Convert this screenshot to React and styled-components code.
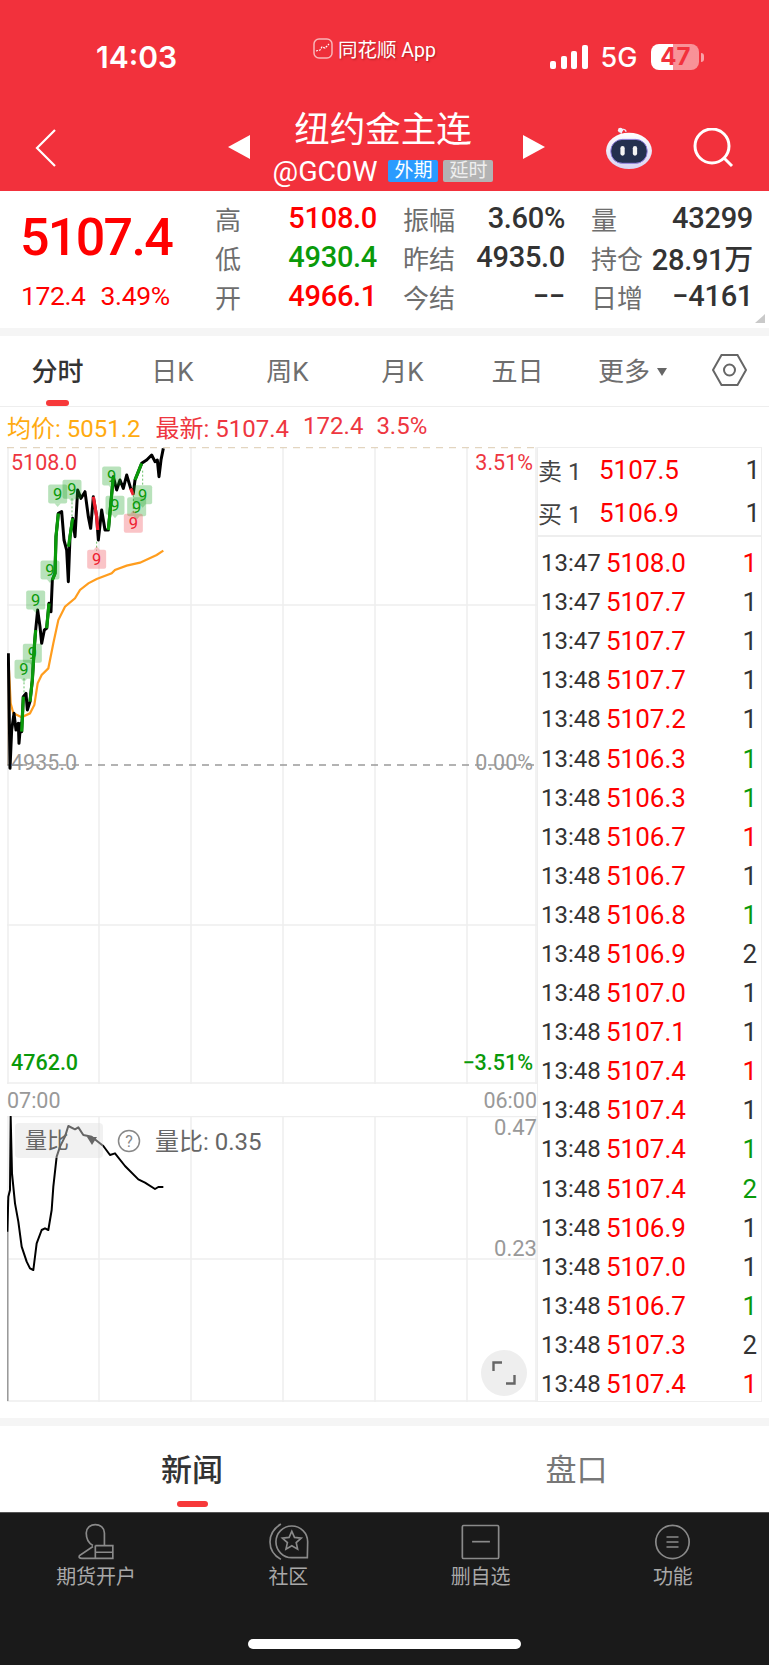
import React from "react";
import styled, { createGlobalStyle } from "styled-components";

const GlobalStyle = createGlobalStyle`
  html, body { margin: 0; padding: 0; background: #fff; }
  body { font-family: Roboto, "Noto Sans CJK SC", sans-serif; }
  * { box-sizing: border-box; }
`;

const RED = "#ff0000";
const GREEN = "#0a9a0a";
const DARK = "#333333";

const Page = styled.div`
  width: 769px;
  height: 1665px;
  overflow: hidden;
  position: relative;
  background: #fff;
`;

/* ---------- header ---------- */
const Header = styled.div`
  height: 191px;
  background: #f2313c;
  color: #fff;
`;

const StatusBar = styled.div`
  height: 105px;
  padding: 9px 0 0 96px;
  display: flex;
  align-items: center;
`;

const Clock = styled.div`
  width: 88px;
  font: 600 30px Inter, sans-serif;
  white-space: nowrap;
`;

const AppLabel = styled.div`
  margin: 0 0 18px 129px;
  width: 124px;
  display: flex;
  align-items: center;
  gap: 5px;
  font-size: 19.5px;
  white-space: nowrap;
  text-shadow: 1px 1px 2px rgba(90, 0, 0, 0.45);
`;

const Signal = styled.div`
  margin-left: 113px;
  display: flex;
  align-items: flex-end;
  gap: 4.5px;
  height: 24px;
`;

const SignalBar = styled.span`
  width: 6px;
  height: ${(p) => p.$h}px;
  background: #fff;
  border-radius: 2px;
`;

const Net = styled.div`
  margin-left: 13px;
  font: 500 27px Inter, sans-serif;
`;

const Battery = styled.div`
  margin-left: 14px;
  width: 48px;
  height: 26px;
  border-radius: 8px;
  position: relative;
  background: linear-gradient(90deg, #fff 46%, rgba(255, 255, 255, 0.47) 46%);
  color: #f2313c;
  font: 700 24px/26px Inter, sans-serif;
  text-align: center;
  &::after {
    content: "";
    position: absolute;
    right: -5px;
    top: 9px;
    width: 3px;
    height: 9px;
    border-radius: 0 3px 3px 0;
    background: rgba(255, 255, 255, 0.55);
  }
`;

const NavRow = styled.div`
  height: 86px;
  display: grid;
  grid-template-columns: 228px 22px 266px 28px 61px 47px 41px 41px;
  align-items: center;
`;

const BackIcon = styled.svg`
  margin-left: 35px;
  display: block;
`;

const Centre = styled.div`
  align-self: start;
  display: flex;
  flex-direction: column;
  align-items: center;
`;

const Title = styled.div`
  font-size: 35.5px;
  line-height: 44px;
  font-family: "Noto Sans CJK SC", sans-serif;
`;

const Code = styled.div`
  margin-top: 10px;
  display: flex;
  align-items: center;
  gap: 5px;
  height: 24px;
`;

const CodeText = styled.span`
  font-size: 28.5px;
  margin-right: 6px;
`;

const Badge = styled.span`
  width: 50px;
  height: 22px;
  background: ${(p) => p.$bg};
  color: ${(p) => p.$fg};
  border-radius: 2px;
  font-size: 19px;
  line-height: 22px;
  text-align: center;
`;

const Arrow = styled.svg`
  display: block;
  margin-top: -3px;
  ${(p) => p.$right && "margin-left: 7px;"}
`;

const RobotIcon = styled.svg`
  display: block;
  grid-column: 6 / 7;
  grid-row: 1;
`;

const SearchIcon = styled.svg`
  display: block;
  grid-column: 8 / 9;
  grid-row: 1;
`;

/* ---------- quote stats ---------- */
const Stats = styled.div`
  height: 137px;
  display: flex;
  position: relative;
  background: #fff;
`;

const Latest = styled.div`
  width: 215px;
  padding: 19px 0 0 20px;
`;

const LatestPrice = styled.div`
  color: ${RED};
  font-size: 52px;
  line-height: 56px;
  font-weight: 500;
  letter-spacing: -1.7px;
`;

const LatestChange = styled.div`
  margin-top: 14px;
  padding-left: 1px;
  color: ${RED};
  font-size: 26.5px;
  line-height: 32px;
  display: flex;
  gap: 15px;
  letter-spacing: -0.4px;
`;

const StatGrid = styled.div`
  padding-top: 7.5px;
  display: grid;
  grid-template-columns: repeat(3, 162px);
  grid-auto-rows: 39px;
  column-gap: 26px;
`;

const StatCell = styled.div`
  display: flex;
  justify-content: space-between;
  align-items: center;
  white-space: nowrap;
`;

const StatLabel = styled.span`
  color: #6e6e6e;
  font-size: 26px;
  font-family: "Noto Sans CJK SC", sans-serif;
  line-height: 39px;
`;

const StatValue = styled.span`
  color: ${(p) => p.$color || DARK};
  font-size: 29px;
  font-weight: 500;
  letter-spacing: -0.3px;
`;

const Corner = styled.div`
  position: absolute;
  right: 4px;
  bottom: 5px;
  width: 0;
  height: 0;
  border-left: 10px solid transparent;
  border-bottom: 9px solid #c9c9c9;
`;

const Band = styled.div`
  height: 8px;
  margin-top: ${(p) => p.$top || 0}px;
  background: #f5f5f5;
`;

/* ---------- period tabs ---------- */
const TabBar = styled.div`
  height: 71px;
  display: grid;
  grid-template-columns: repeat(6, 115px) 79px;
  border-bottom: 1px solid #eeeeee;
`;

const Tab = styled.div`
  display: flex;
  flex-direction: column;
  align-items: center;
  padding-top: 18px;
`;

const TabText = styled.div`
  height: 36px;
  display: flex;
  align-items: center;
  gap: 7px;
  font-size: 26px;
  line-height: 36px;
  font-weight: ${(p) => (p.$active ? 500 : 400)};
  color: ${(p) => (p.$active ? DARK : "#6e6e6e")};
`;

const TabLine = styled.div`
  margin-top: 10px;
  width: ${(p) => p.$w}px;
  height: 6px;
  border-radius: 3px;
  background: #f7393a;
`;

const Caret = styled.span`
  width: 0;
  height: 0;
  border-left: 5.5px solid transparent;
  border-right: 5.5px solid transparent;
  border-top: 8px solid #666;
`;

const Legend = styled.div`
  height: 40px;
  padding: 0 0 2px 7px;
  display: flex;
  align-items: center;
  font-size: 24px;
  white-space: nowrap;
  color: #ee3640;
`;

const LegendPart = styled.span`
  margin-left: ${(p) => p.$gap || 0}px;
  color: ${(p) => p.$color || "inherit"};
`;

/* ---------- chart ---------- */
const ChartRow = styled.div`
  height: 955px;
  padding-left: 7px;
  display: flex;
`;

const ChartCol = styled.div`
  width: 530px;
  display: flex;
  flex-direction: column;
`;

const Pane = styled.div`
  position: relative;
  height: ${(p) => p.$h}px;
`;

const PaneSvg = styled.svg`
  display: block;
`;

const AxisOverlay = styled.div`
  position: absolute;
  inset: 0;
  padding: 0 4px 7px;
  display: flex;
  flex-direction: column;
  justify-content: space-between;
`;

const AxisRow = styled.div`
  height: 30px;
  display: flex;
  justify-content: space-between;
  align-items: center;
  font-size: 21.5px;
  color: ${(p) => p.$color};
  font-weight: ${(p) => p.$weight || 400};
`;

const TimeRow = styled.div`
  height: 32px;
  display: flex;
  justify-content: space-between;
  align-items: center;
  color: #999;
  font-size: 21.5px;
`;

const SubScale = styled.div`
  position: absolute;
  right: 0;
  top: ${(p) => p.$top}px;
  color: #999;
  font-size: 22px;
  line-height: 24px;
`;

const IndicatorBar = styled.div`
  position: absolute;
  left: 8px;
  top: 7px;
  display: flex;
  align-items: center;
`;

const IndicatorChip = styled.div`
  width: 88px;
  height: 35px;
  padding-left: 10px;
  border-radius: 4px;
  background: rgba(225, 225, 225, 0.45);
  color: #666;
  font-size: 22px;
  line-height: 35px;
  display: flex;
  align-items: center;
  gap: 18px;
`;

const HelpIcon = styled.svg`
  margin-left: 14px;
  display: block;
`;

const IndicatorText = styled.div`
  margin: -3px 0 0 14px;
  color: #666;
  font-size: 24px;
  white-space: nowrap;
`;

const ExpandButton = styled.div`
  position: absolute;
  right: 10px;
  bottom: 6px;
  width: 46px;
  height: 46px;
  border-radius: 50%;
  background: #eeeeee;
  display: flex;
  align-items: center;
  justify-content: center;
`;

/* ---------- order book ---------- */
const Side = styled.div`
  width: 225px;
  height: 954.5px;
  border: 1.5px solid #eeeeee;
`;

const Book = styled.div`
  height: 88.5px;
  border-bottom: 2.5px solid #eeeeee;
`;

const BookRow = styled.div`
  height: 43px;
  display: grid;
  grid-template-columns: 61px 1fr auto;
  align-items: center;
  padding-right: 1px;
`;

const BookLabel = styled.div`
  color: #444;
  font-size: 24px;
  white-space: nowrap;
`;

const Ticks = styled.div`
  padding-top: 7px;
`;

const Tick = styled.div`
  height: 39.1px;
  display: grid;
  grid-template-columns: 65px 1fr auto;
  align-items: center;
  padding: 0 4px 0 3px;
`;

const Time = styled.div`
  color: ${DARK};
  font-size: 24px;
`;

const Price = styled.div`
  color: ${RED};
  font-size: 26px;
`;

const Vol = styled.div`
  color: ${(p) => p.$color || DARK};
  font-size: 26px;
`;

/* ---------- lower tabs and nav ---------- */
const NewsTabs = styled.div`
  height: 86px;
  display: grid;
  grid-template-columns: 384px 385px;
`;

const NewsTab = styled.div`
  display: flex;
  flex-direction: column;
  align-items: center;
  padding-top: 20px;
`;

const NewsText = styled.div`
  font-size: 31px;
  line-height: 44px;
  font-weight: ${(p) => (p.$active ? 500 : 400)};
  color: ${(p) => (p.$active ? DARK : "#777")};
  font-family: "Noto Sans CJK SC", sans-serif;
`;

const NewsLine = styled.div`
  margin-top: 11px;
  width: 31px;
  height: 6px;
  border-radius: 3px;
  background: #f7393a;
`;

const BottomNav = styled.div`
  height: 153px;
  background: #1a1a1a;
  border-top: 1px solid #555;
  display: grid;
  grid-template-columns: repeat(4, 192.25px);
  align-content: start;
  padding-top: 9px;
`;

const NavItem = styled.div`
  display: flex;
  flex-direction: column;
  align-items: center;
  color: #a8a8a8;
  font-size: 20px;
`;

const NavIconBox = styled.div`
  height: 39px;
  display: flex;
  align-items: center;
  justify-content: center;
`;

const NavLabel = styled.div`
  line-height: 28px;
  margin-top: 1px;
  font-family: "Noto Sans CJK SC", sans-serif;
`;

const HomeBar = styled.div`
  position: absolute;
  left: 248px;
  bottom: 16px;
  width: 273px;
  height: 10px;
  border-radius: 5px;
  background: #fff;
`;

/* ---------- data ---------- */
const pts = (arr, oy) => arr.map(([x, y]) => `${x / 3},${oy + y / 3}`).join(" ");

const priceLine = [
  [25, 670], [27, 800], [30, 1015], [35, 900], [42, 850], [48, 900], [55, 880], [57, 940], [62, 880],
  [65, 905], [70, 800], [78, 790], [82, 840], [90, 815], [97, 750], [103, 650], [107, 600], [113, 540],
  [120, 590], [125, 640], [133, 600], [140, 595], [147, 520], [153, 545], [157, 450], [165, 430],
  [168, 320], [175, 250], [185, 245], [192, 330], [200, 360], [205, 455], [210, 320], [218, 265],
  [225, 320], [233, 180], [243, 205], [255, 185], [265, 260], [272, 295], [280, 200], [290, 260],
  [295, 330], [305, 240], [315, 300], [325, 300], [340, 140], [350, 180], [360, 150], [370, 175],
  [380, 135], [392, 175], [400, 190], [405, 150], [425, 100], [440, 90], [455, 75], [465, 95],
  [472, 90], [477, 140], [483, 90], [490, 55],
];

const greenParts = [
  [[65, 905], [70, 800]],
  [[90, 815], [97, 750], [103, 650], [107, 600]],
  [[140, 595], [147, 520]],
  [[157, 450], [165, 430], [168, 320], [175, 250]],
  [[205, 350], [210, 320], [218, 265]],
  [[325, 300], [340, 140]],
  [[405, 150], [425, 100]],
];

const redParts = [
  [[280, 200], [290, 260], [293, 300]],
  [[392, 175], [400, 195]],
];

const avgLine = [
  [27, 720], [32, 820], [40, 850], [65, 862], [90, 850], [103, 825], [113, 760], [125, 735], [145, 715],
  [160, 640], [175, 570], [195, 530], [225, 505], [240, 480], [265, 460], [290, 447], [335, 430],
  [345, 420], [380, 407], [420, 398], [470, 375], [490, 362],
];

const ratioLine = [
  [22, 575], [25, 470], [30, 450], [32, 230], [36, 400], [45, 490], [55, 545], [65, 620], [80, 665],
  [90, 685], [100, 690], [110, 610], [125, 570], [135, 565], [145, 570], [155, 510], [160, 440],
  [170, 350], [180, 320], [195, 290], [205, 258], [225, 268], [235, 262], [250, 285], [275, 290],
  [310, 318], [330, 345], [345, 340], [375, 378], [415, 418], [435, 428], [465, 447], [475, 441], [490, 441],
];

const flags = [
  { x: 72, y: 718 }, { x: 97, y: 670 }, { x: 107, y: 510 }, { x: 150, y: 420 },
  { x: 173, y: 192 }, { x: 216, y: 178 }, { x: 335, y: 138 }, { x: 345, y: 226 },
  { x: 428, y: 194 }, { x: 410, y: 230 }, { x: 290, y: 388, red: 1 }, { x: 400, y: 280, red: 1 },
];

const stemLines = [
  [72, 745, 72, 800], [216, 205, 216, 265], [428, 122, 428, 170], [290, 335, 290, 362], [400, 195, 400, 255],
];

const ticks = [
  ["13:47", "5108.0", "1", RED], ["13:47", "5107.7", "1"], ["13:47", "5107.7", "1"], ["13:48", "5107.7", "1"],
  ["13:48", "5107.2", "1"], ["13:48", "5106.3", "1", GREEN], ["13:48", "5106.3", "1", GREEN], ["13:48", "5106.7", "1", RED],
  ["13:48", "5106.7", "1"], ["13:48", "5106.8", "1", GREEN], ["13:48", "5106.9", "2"], ["13:48", "5107.0", "1"],
  ["13:48", "5107.1", "1"], ["13:48", "5107.4", "1", RED], ["13:48", "5107.4", "1"], ["13:48", "5107.4", "1", GREEN],
  ["13:48", "5107.4", "2", GREEN], ["13:48", "5106.9", "1"], ["13:48", "5107.0", "1"], ["13:48", "5106.7", "1", GREEN],
  ["13:48", "5107.3", "2"], ["13:48", "5107.4", "1", RED],
];

const stats = [
  ["高", "5108.0", RED], ["振幅", "3.60%"], ["量", "43299"],
  ["低", "4930.4", GREEN], ["昨结", "4935.0"], ["持仓", "28.91万"],
  ["开", "4966.1", RED], ["今结", "−−"], ["日增", "−4161"],
];

const GRID = "#eeeeee";
const vLines = [8, 99, 191, 283, 375, 467, 536];

const Flag = ({ x, y, red }) => {
  const cx = x / 3;
  const cy = 430 + y / 3;
  const fill = red ? "rgba(240,60,70,0.3)" : "rgba(20,160,30,0.3)";
  const edge = red ? cy - 9.5 : cy + 9.5;
  const tip = red ? cy - 13 : cy + 13;
  return (
    <g>
      <rect x={cx - 9.5} y={cy - 9.5} width="19" height="19" rx="2" fill={fill} />
      <path d={`M${cx - 3} ${edge} L${cx} ${tip} L${cx + 3} ${edge}Z`} fill={fill} />
      <text x={cx} y={cy + 6} textAnchor="middle" fontSize="16.5" fontFamily="Roboto, sans-serif" fill={red ? "#ee2030" : "#0a9a0a"}>9</text>
    </g>
  );
};

const MainChart = () => (
  <PaneSvg width="530" height="637" viewBox="7 447 530 637">
    {vLines.map((x) => (
      <line key={x} x1={x} x2={x} y1="447" y2="1084" stroke={GRID} strokeWidth="1.5" />
    ))}
    <line x1="7" x2="537" y1="605" y2="605" stroke={GRID} strokeWidth="1.5" />
    <line x1="7" x2="537" y1="925" y2="925" stroke={GRID} strokeWidth="1.5" />
    <line x1="7" x2="537" y1="1083" y2="1083" stroke={GRID} strokeWidth="1.5" />
    <line x1="7" x2="537" y1="447.5" y2="447.5" stroke="#e3d5c0" strokeWidth="1.5" strokeDasharray="7 6" />
    <line x1="7" x2="537" y1="765" y2="765" stroke="#9a9a9a" strokeWidth="1.5" strokeDasharray="7 6" />
    <line x1="7" x2="7" y1="670" y2="765" stroke="#a89a88" strokeWidth="1.5" />
    {stemLines.map(([x1, y1, x2, y2]) => (
      <line key={`${x1}-${y1}`} x1={x1 / 3} x2={x2 / 3} y1={430 + y1 / 3} y2={430 + y2 / 3} stroke="#0a9a0a" strokeWidth="1" strokeDasharray="2 2" opacity="0.6" />
    ))}
    <polyline points={pts(avgLine, 430)} fill="none" stroke="#ff9d1e" strokeWidth="2.2" />
    <polyline points={pts(priceLine, 430)} fill="none" stroke="#000" strokeWidth="3" strokeLinejoin="round" />
    {greenParts.map((p, i) => (
      <polyline key={i} points={pts(p, 430)} fill="none" stroke="#0a9a0a" strokeWidth="3.2" />
    ))}
    {redParts.map((p, i) => (
      <polyline key={i} points={pts(p, 430)} fill="none" stroke="#ee2030" strokeWidth="3.2" />
    ))}
    {flags.map((f) => (
      <Flag key={`${f.x}-${f.y}`} {...f} />
    ))}
  </PaneSvg>
);

const SubChart = () => (
  <PaneSvg width="530" height="286" viewBox="7 1116 530 286">
    {vLines.map((x) => (
      <line key={x} x1={x} x2={x} y1="1116" y2="1402" stroke={GRID} strokeWidth="1.5" />
    ))}
    <line x1="7" x2="537" y1="1116.5" y2="1116.5" stroke={GRID} strokeWidth="1.5" />
    <line x1="7" x2="537" y1="1259" y2="1259" stroke={GRID} strokeWidth="1.5" />
    <line x1="7" x2="537" y1="1401" y2="1401" stroke={GRID} strokeWidth="1.5" />
    <line x1="7.5" x2="7.5" y1="1200" y2="1401" stroke="#9a9a9a" strokeWidth="2" />
    <polyline points={pts(ratioLine, 1040)} fill="none" stroke="#000" strokeWidth="2" strokeLinejoin="round" />
  </PaneSvg>
);

const Robot = () => (
  <RobotIcon width="48" height="44" viewBox="0 0 50 46">
    <defs>
      <linearGradient id="robotShell" x1="0" y1="0" x2="0" y2="1">
        <stop offset="0" stopColor="#ffffff" />
        <stop offset="1" stopColor="#d9d4f2" />
      </linearGradient>
    </defs>
    <path d="M17 8 C16 3 21 2 22 6" fill="none" stroke="#e9e6f8" strokeWidth="1.5" />
    <circle cx="16" cy="4.5" r="2.6" fill="#f3f1fb" />
    <ellipse cx="25" cy="26" rx="24" ry="19" fill="url(#robotShell)" />
    <rect x="6" y="14" width="38" height="25" rx="12" fill="#24304f" stroke="#8f7de0" strokeWidth="1" />
    <rect x="16" y="21" width="4.5" height="10" rx="2.2" fill="#f4f4f4" />
    <rect x="29" y="21" width="4.5" height="10" rx="2.2" fill="#f4f4f4" />
  </RobotIcon>
);

const Logo = () => (
  <svg width="20" height="21" viewBox="0 0 20 21">
    <rect x="1" y="1" width="18" height="19" rx="5" fill="#ee2f3a" stroke="#f9b5b8" strokeWidth="1.5" />
    <path d="M3 13 L7 12 L9 9 L12 10 L16 6" fill="none" stroke="#fff" strokeWidth="1.2" strokeDasharray="2 1" />
  </svg>
);

const PersonIcon = () => (
  <svg width="36" height="37" viewBox="84 25 106 110" fill="none" stroke="#8a8a8a" strokeWidth="5">
    <path d="M128 92 C112 84 108 70 108 55 C108 40 120 30 135 30 C150 30 162 40 162 55 L162 92" />
    <path d="M135 92 H187 V130 H95 Q84 130 88 122 L128 95 M137 112 H187 M135 92 V130" />
  </svg>
);

const CommunityIcon = () => (
  <svg width="43" height="39" viewBox="650 22 130 118" fill="none" stroke="#8a8a8a" strokeWidth="5">
    <path d="M772 130 H725 A48 48 0 1 1 773 82 Z" />
    <path d="M692 28 C648 55 648 110 692 135" />
    <polygon points="725,50 733.2,68.7 753.5,70.7 738.3,84.3 742.6,104.3 725,94 707.4,104.3 711.7,84.3 696.5,70.7 716.8,68.7" />
  </svg>
);

const RemoveIcon = () => (
  <svg width="39" height="36" viewBox="92 28 116 106" fill="none" stroke="#8a8a8a" strokeWidth="5">
    <rect x="96" y="32" width="108" height="98" rx="4" />
    <path d="M125 80 H178" />
  </svg>
);

const MenuIcon = () => (
  <svg width="37" height="36" viewBox="670 26 110 108" fill="none" stroke="#8a8a8a" strokeWidth="5">
    <circle cx="725" cy="80" r="50" />
    <path d="M707 65 H743 M707 80 H743 M707 95 H743" />
  </svg>
);

const App = () => {
  return (
    <Page>
      <GlobalStyle />
      <Header>
        <StatusBar>
          <Clock>14:03</Clock>
          <AppLabel>
            <Logo />
            同花顺 App
          </AppLabel>
          <Signal>
            <SignalBar $h={8} />
            <SignalBar $h={13} />
            <SignalBar $h={18} />
            <SignalBar $h={24} />
          </Signal>
          <Net>5G</Net>
          <Battery>47</Battery>
        </StatusBar>
        <NavRow>
          <BackIcon width="21" height="38" viewBox="0 0 21 38">
            <path d="M20 1 L2 19 L20 37" fill="none" stroke="#fff" strokeWidth="2.2" />
          </BackIcon>
          <Arrow width="22" height="24" viewBox="0 0 22 24">
            <path d="M22 0 V24 L0 12Z" fill="#fff" />
          </Arrow>
          <Centre>
            <Title>纽约金主连</Title>
            <Code>
              <CodeText>@GC0W</CodeText>
              <Badge $bg="#2a9bff" $fg="#fff">外期</Badge>
              <Badge $bg="#b3b3b3" $fg="#eeeeee">延时</Badge>
            </Code>
          </Centre>
          <Arrow $right width="22" height="24" viewBox="0 0 22 24">
            <path d="M0 0 V24 L22 12Z" fill="#fff" />
          </Arrow>
          <Robot />
          <SearchIcon width="41" height="40" viewBox="0 0 41 40">
            <circle cx="19" cy="18" r="17" fill="none" stroke="#fff" strokeWidth="3" />
            <path d="M31 30 L39 38" stroke="#fff" strokeWidth="3" />
          </SearchIcon>
        </NavRow>
      </Header>

      <Stats>
        <Latest>
          <LatestPrice>5107.4</LatestPrice>
          <LatestChange>
            <span>172.4</span>
            <span>3.49%</span>
          </LatestChange>
        </Latest>
        <StatGrid>
          {stats.map(([label, value, color]) => (
            <StatCell key={label}>
              <StatLabel>{label}</StatLabel>
              <StatValue $color={color}>{value}</StatValue>
            </StatCell>
          ))}
        </StatGrid>
        <Corner />
      </Stats>
      <Band />

      <TabBar>
        <Tab>
          <TabText $active>分时</TabText>
          <TabLine $w={23} />
        </Tab>
        <Tab><TabText>日K</TabText></Tab>
        <Tab><TabText>周K</TabText></Tab>
        <Tab><TabText>月K</TabText></Tab>
        <Tab><TabText>五日</TabText></Tab>
        <Tab>
          <TabText>更多<Caret /></TabText>
        </Tab>
        <Tab>
          <svg width="35" height="32" viewBox="0 0 35 32">
            <path d="M1 16 L9.5 1 H25.5 L34 16 L25.5 31 H9.5 Z" fill="none" stroke="#666" strokeWidth="2" />
            <circle cx="17.5" cy="16" r="5.5" fill="none" stroke="#666" strokeWidth="2" />
          </svg>
        </Tab>
      </TabBar>

      <Legend>
        <LegendPart $color="#ffaa10">均价: 5051.2</LegendPart>
        <LegendPart $gap={15}>最新: 5107.4</LegendPart>
        <LegendPart $gap={14}>172.4</LegendPart>
        <LegendPart $gap={13}>3.5%</LegendPart>
      </Legend>

      <ChartRow>
        <ChartCol>
          <Pane $h={637}>
            <MainChart />
            <AxisOverlay>
              <AxisRow $color="#ee3640"><span>5108.0</span><span>3.51%</span></AxisRow>
              <AxisRow $color="#999"><span>4935.0</span><span>0.00%</span></AxisRow>
              <AxisRow $color={GREEN} $weight={500}><span>4762.0</span><span>−3.51%</span></AxisRow>
            </AxisOverlay>
          </Pane>
          <TimeRow>
            <span>07:00</span>
            <span>06:00</span>
          </TimeRow>
          <Pane $h={286}>
            <SubChart />
            <SubScale $top={0}>0.47</SubScale>
            <SubScale $top={121}>0.23</SubScale>
            <IndicatorBar>
              <IndicatorChip>
                量比
                <Caret />
              </IndicatorChip>
              <HelpIcon width="24" height="24" viewBox="0 0 24 24">
                <circle cx="12" cy="12" r="10.5" fill="none" stroke="#888" strokeWidth="1.5" />
                <text x="12" y="17.5" textAnchor="middle" fontSize="16" fontFamily="Roboto, sans-serif" fill="#888">?</text>
              </HelpIcon>
              <IndicatorText>量比: 0.35</IndicatorText>
            </IndicatorBar>
            <ExpandButton>
              <svg width="24" height="24" viewBox="0 0 24 24">
                <path d="M1.5 10 V1.5 H10 M22.5 14 V22.5 H14" fill="none" stroke="#666" strokeWidth="2.4" />
              </svg>
            </ExpandButton>
          </Pane>
        </ChartCol>
        <Side>
          <Book>
            <BookRow>
              <BookLabel>卖 1</BookLabel>
              <Price>5107.5</Price>
              <Vol>1</Vol>
            </BookRow>
            <BookRow>
              <BookLabel>买 1</BookLabel>
              <Price>5106.9</Price>
              <Vol>1</Vol>
            </BookRow>
          </Book>
          <Ticks>
            {ticks.map(([time, price, vol, color], i) => (
              <Tick key={i}>
                <Time>{time}</Time>
                <Price>{price}</Price>
                <Vol $color={color}>{vol}</Vol>
              </Tick>
            ))}
          </Ticks>
        </Side>
      </ChartRow>

      <Band $top={16} />
      <NewsTabs>
        <NewsTab $active>
          <NewsText $active>新闻</NewsText>
          <NewsLine />
        </NewsTab>
        <NewsTab>
          <NewsText>盘口</NewsText>
        </NewsTab>
      </NewsTabs>

      <BottomNav>
        <NavItem><NavIconBox><PersonIcon /></NavIconBox><NavLabel>期货开户</NavLabel></NavItem>
        <NavItem><NavIconBox><CommunityIcon /></NavIconBox><NavLabel>社区</NavLabel></NavItem>
        <NavItem><NavIconBox><RemoveIcon /></NavIconBox><NavLabel>删自选</NavLabel></NavItem>
        <NavItem><NavIconBox><MenuIcon /></NavIconBox><NavLabel>功能</NavLabel></NavItem>
      </BottomNav>
      <HomeBar />
    </Page>
  );
};

export default App;
